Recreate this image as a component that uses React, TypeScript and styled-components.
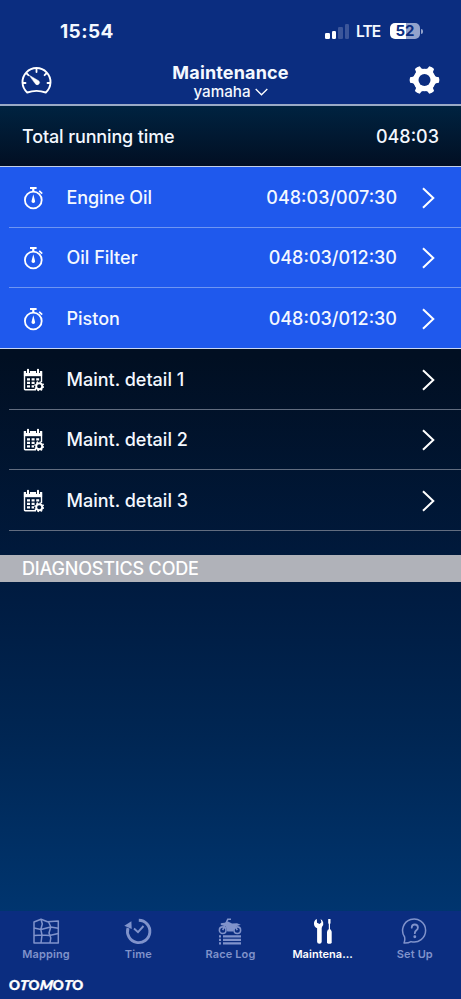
import React from "react";
import styled, { createGlobalStyle } from "styled-components";

const Global = createGlobalStyle`
  * { box-sizing: border-box; }
  body { margin: 0; background: #0b2d80; font-family: Inter, "Liberation Sans", sans-serif; color: #f4f8ff; }
  svg { display: block; flex: none; }
`;

const Screen = styled.div`
  width: 461px;
  height: 999px;
  display: flex;
  flex-direction: column;
  overflow: hidden;
`;

const Header = styled.header`
  height: 106px;
  background: #0b2d80;
  border-bottom: 2px solid #9aaac6;
  flex: none;
`;

const StatusBar = styled.div`
  height: 42px;
  padding: 20px 38px 0 60px;
  display: flex;
  align-items: center;
  justify-content: space-between;
`;

const Clock = styled.span`
  padding-top: 1px;
  font-size: 19px;
  line-height: 20px;
  font-weight: 700;
  letter-spacing: 0.4px;
`;

const StatusIcons = styled.div`
  display: flex;
  align-items: center;
`;

const Signal = styled.div`
  display: flex;
  align-items: flex-end;
  gap: 2px;
  height: 15px;
`;

const Bar = styled.i<{ $h: number; $on?: boolean }>`
  width: 4.5px;
  height: ${(p) => p.$h}px;
  border-radius: 1.2px;
  background: ${(p) => (p.$on ? "#fff" : "#3c569a")};
`;

const Network = styled.span`
  width: 25px;
  margin: 1px 9px 0 7px;
  font-size: 15.5px;
  line-height: 18px;
  font-weight: 600;
  letter-spacing: -0.9px;
  white-space: nowrap;
`;

const Battery = styled.div`
  width: 30px;
  height: 16px;
  border-radius: 5px;
  background: linear-gradient(90deg, #fff 52%, #93a3cc 52%);
  color: #0b2d80;
  font-size: 15px;
  line-height: 16px;
  font-weight: 700;
  text-align: center;
`;

const BatteryTip = styled.i`
  width: 2px;
  height: 5px;
  margin-left: 1px;
  border-radius: 0 2px 2px 0;
  background: #93a3cc;
`;

const TitleBar = styled.div`
  height: 62px;
  padding: 0 21px;
  display: flex;
  justify-content: space-between;
`;

const IconSlot = styled.div<{ $top: number }>`
  width: 31px;
  padding-top: ${(p) => p.$top}px;
`;

const Titles = styled.div`
  display: flex;
  flex-direction: column;
  align-items: center;
  padding-top: 20px;
`;

const Title = styled.h1`
  margin: 0;
  font-size: 18px;
  line-height: 21px;
  font-weight: 700;
  letter-spacing: 0.15px;
`;

const Vehicle = styled.div`
  display: flex;
  align-items: center;
  gap: 4px;
  font-size: 15.2px;
  line-height: 18px;
  font-weight: 450;
`;

const Total = styled.section`
  height: 61px;
  flex: none;
  padding: 1px 22px 0;
  display: flex;
  align-items: center;
  justify-content: space-between;
  background: linear-gradient(#002341, #020f23);
  border-bottom: 1px solid #c3d1e8;
`;

const Label = styled.span<{ $ls?: number }>`
  font-size: 18px;
  line-height: 22px;
  font-weight: 500;
  letter-spacing: ${(p) => p.$ls ?? 0}px;
  white-space: nowrap;
`;

const Content = styled.main`
  flex: 1;
  background: linear-gradient(#010f22 0, #010f22 190px, #001b40 420px, #002653 570px, #00356f 744px);
`;

const Group = styled.div<{ $active?: boolean }>`
  height: 182px;
  background: ${(p) => (p.$active ? "#1f59ed" : "transparent")};
  border-bottom: ${(p) => (p.$active ? "1px solid #cad8f6" : "0")};
`;

const Row = styled.div<{ $line: string }>`
  height: 60.5px;
  margin-left: 9px;
  padding: 2px 26px 0 14px;
  display: flex;
  align-items: center;
  border-bottom: 1px solid ${(p) => p.$line};
  &:last-child { ${(p) => p.$line === "#6e95f2" && "border-color: transparent;"} }
`;

const RowName = styled(Label)`
  flex: 1;
  margin-left: 22.5px;
`;

const RowTime = styled(Label)`
  margin-right: 25px;
`;

const Section = styled.h2`
  height: 27px;
  margin: 24px 0 0;
  padding-left: 22px;
  background: #b0b2b9;
  color: #fff;
  font-size: 18px;
  line-height: 28px;
  font-weight: 500;
  letter-spacing: -0.18px;
`;

const Footer = styled.footer`
  height: 88px;
  flex: none;
  background: #0b2d80;
`;

const Tabs = styled.nav`
  display: grid;
  grid-template-columns: repeat(5, 92.2px);
  height: 67px;
`;

const Tab = styled.div<{ $on?: boolean }>`
  display: flex;
  flex-direction: column;
  align-items: center;
  padding-top: 6px;
  color: ${(p) => (p.$on ? "#fff" : "#8093cb")};
  font-size: 11px;
  line-height: 14px;
  font-weight: 600;
  letter-spacing: ${(p) => (p.$on ? 0.05 : 0.12)}px;
  svg { margin-bottom: 2px; }
`;

const Brand = styled.div`
  display: flex;
  gap: 0.2px;
  padding-left: 9px;
  font-family: Lato, Inter, sans-serif;
  font-size: 13.5px;
  line-height: 15px;
  font-weight: 900;
  color: #fff;
  -webkit-text-stroke: 0.4px #fff;
  em { display: inline-block; font-style: normal; transform: skewX(-14deg); }
`;

const Gauge = () => (
  <svg width="31" height="28" viewBox="0 0 31 28" fill="none" stroke="#fff" strokeWidth="1.9" strokeLinecap="round" strokeLinejoin="round">
    <path d="M6.2 25.5A14 14 0 1 1 24.8 25.5Q15.5 22.3 6.2 25.5Z" />
    <path d="M15.5 2v3M5.7 6.5l1.7 1.7M25.3 6.5l-1.7 1.7M2 16h2.5M29 16h-2.5" strokeWidth="1.8" />
    <path d="M8.3 8.3L17.9 13.9A2.3 2.3 0 0 1 14.5 17Z" fill="#fff" stroke="#fff" strokeWidth=".5" />
  </svg>
);

const Gear = () => (
  <svg width="31" height="30" viewBox="-15.5 -15 31 30">
    <g fill="#fff">
      <circle r="11.3" />
      {[0, 60, 120, 180, 240, 300].map((a) => (
        <path key={a} transform={`rotate(${a})`} d="M9 -5.2L11.5 -3.2L14.4 -2.8Q15.4 0 14.4 2.8L11.5 3.2L9 5.2Z" />
      ))}
    </g>
    <circle r="6" fill="#0b2d80" />
  </svg>
);

const Stopwatch = () => (
  <svg width="21" height="24" viewBox="0 0 21 24" fill="none" stroke="#fff">
    <circle cx="10.3" cy="14" r="8.4" strokeWidth="1.8" />
    <path d="M7 2h6.6M10.3 2v3.5" strokeWidth="2.2" />
    <path d="M16.2 4.8l3 2.8" strokeWidth="1.7" />
    <path d="M10.3 8.3L12 14.7A1.8 1.8 0 1 1 8.6 14.7Z" fill="#fff" stroke="none" />
  </svg>
);

const Calendar = () => (
  <svg width="21" height="24" viewBox="0 0 21 24" fill="none" stroke="#fff">
    <path d="M13 21.8H2.2Q1.5 21.8 1.5 21V4H18.5V14" strokeWidth="1.4" />
    <path d="M.9 3H19.1V8.2H.9Z" fill="#fff" stroke="none" />
    <path d="M5 1.5v3.5M15 1.5v3.5" stroke="#010f22" strokeWidth="3.8" />
    <path d="M5 1.7v3.3M15 1.7v3.3" strokeWidth="2.1" strokeLinecap="round" />
    <path d="M4 11.3h3M8.6 11.3h3M13.2 11.3h3M4 14.8h3M8.6 14.8h3M4 18.3h3M8.6 18.3h2.4" strokeWidth="2.3" />
    <circle cx="16.2" cy="18.2" r="3" strokeWidth="1.9" />
    <circle cx="16.2" cy="18.2" r="4.3" strokeWidth="1.4" strokeDasharray="1.7 1.677" />
  </svg>
);

const Chevron = () => (
  <svg width="13" height="22" viewBox="0 0 13 22" fill="none" stroke="#fff" strokeWidth="2">
    <path d="M1 1.2L11.3 11L1 20.8" />
  </svg>
);

const MapIcon = () => (
  <svg width="28" height="28" viewBox="0 0 28 28" fill="none" stroke="currentColor" strokeWidth="1.5" strokeLinejoin="round">
    <path d="M2 5L9 2.2L15.5 4.8L26.3 4V26H2Z" />
    <path d="M9 2.2L10.3 7L8.8 12.5L10 18L9 26M16.5 4.8L18.8 10L17 16L18.8 21L18 26M2 11L9 12.5L18.5 10L26.3 11.2M2 18.5L10 18L17.5 18.5L26.3 16.5" />
  </svg>
);

const TimeIcon = () => (
  <svg width="28" height="28" viewBox="0 0 28 28" fill="none" stroke="currentColor">
    <path d="M14.8 3.2A11.2 11.2 0 1 1 4 11" strokeWidth="2.9" />
    <path d="M.3 8.7L7.4 4.3L7.7 12Z" fill="currentColor" stroke="none" />
    <path d="M10 11.5L14 15.2L19.5 9" strokeWidth="1.9" />
  </svg>
);

const RaceIcon = () => (
  <svg width="28" height="28" viewBox="0 0 28 28" fill="none" stroke="currentColor">
    <circle cx="6.7" cy="13.2" r="3.3" strokeWidth="1.6" />
    <circle cx="21.3" cy="13.2" r="3.3" strokeWidth="1.6" />
    <path d="M4.8 6.2L10 5.5L12 4.5L16 6.5L21 6.2L24.8 7.8L19.5 9.4L17.3 14.5H11.3L9.8 9.6L4.8 8Z" fill="currentColor" stroke="none" />
    <path d="M15 2.3H11.8L6.7 13.2M18.5 8.5L21.3 13.2" strokeWidth="1.6" />
    <path d="M3 19.3h2M7 19.3h18M3 22.8h2M7 22.8h18M3 26.3h2M7 26.3h18" strokeWidth="2.3" />
  </svg>
);

const ToolsIcon = () => (
  <svg width="28" height="28" viewBox="0 0 28 28" fill="currentColor">
    <path d="M7.8 1.9L8 5.8L10.6 7L12.4 5.3L11.6 2A5 5 0 0 1 13.2 9.6L12.7 11V24.8Q12.7 26.8 10.4 26.8T8.1 24.8V11.3A5.2 5.2 0 0 1 7.8 1.9Z" />
    <path d="M19.2 2h2.3v4L21 7.2V13h-1.2V7.2L19.2 6Z" />
    <path d="M19 12.5h2.8l.9 2.3v10.5q0 1.4-1.3 1.4h-2.2q-1.2 0-1.2-1.4V14.8Z" />
  </svg>
);

const HelpIcon = () => (
  <svg width="28" height="28" viewBox="0 0 28 28" fill="none" stroke="currentColor" strokeWidth="1.5" strokeLinecap="round" strokeLinejoin="round">
    <path d="M3 26Q4.2 23.8 3.6 20A11.5 11.5 0 1 1 10 24.6Q7.2 26.2 3 26Z" />
    <path d="M10.7 10.7Q10.8 7.5 13.8 7.5T16.9 10.4Q16.9 12.1 15.4 13.2T13.8 16.2" strokeWidth="1.8" />
    <circle cx="13.8" cy="19.7" r=".7" fill="currentColor" />
  </svg>
);

const maintenance = [
  { name: "Engine Oil", time: "048:03/007:30", ls: -0.1 },
  { name: "Oil Filter", time: "048:03/012:30", ls: 0 },
  { name: "Piston", time: "048:03/012:30", ls: 0 },
];

const details = ["Maint. detail 1", "Maint. detail 2", "Maint. detail 3"];

const tabs = [
  { name: "Mapping", Icon: MapIcon },
  { name: "Time", Icon: TimeIcon },
  { name: "Race Log", Icon: RaceIcon },
  { name: "Maintena...", Icon: ToolsIcon, on: true },
  { name: "Set Up", Icon: HelpIcon },
];

export default function App() {
  return (
    <Screen>
      <Global />
      <Header>
        <StatusBar>
          <Clock>15:54</Clock>
          <StatusIcons>
            <Signal>
              <Bar $h={5.5} $on />
              <Bar $h={8} $on />
              <Bar $h={11.5} />
              <Bar $h={14.5} />
            </Signal>
            <Network>LTE</Network>
            <Battery>52</Battery>
            <BatteryTip />
          </StatusIcons>
        </StatusBar>
        <TitleBar>
          <IconSlot $top={25}><Gauge /></IconSlot>
          <Titles>
            <Title>Maintenance</Title>
            <Vehicle>
              yamaha
              <svg width="13" height="8" viewBox="0 0 13 8" fill="none" stroke="#fff" strokeWidth="1.3">
                <path d="M.7 1L6.5 6.8L12.3 1" />
              </svg>
            </Vehicle>
          </Titles>
          <IconSlot $top={23}><Gear /></IconSlot>
        </TitleBar>
      </Header>
      <Total>
        <Label $ls={-0.14}>Total running time</Label>
        <Label>048:03</Label>
      </Total>
      <Content>
        <Group $active>
          {maintenance.map((m) => (
            <Row key={m.name} $line="#6e95f2">
              <Stopwatch />
              <RowName $ls={m.ls}>{m.name}</RowName>
              <RowTime>{m.time}</RowTime>
              <Chevron />
            </Row>
          ))}
        </Group>
        <Group>
          {details.map((d) => (
            <Row key={d} $line="#626d80">
              <Calendar />
              <RowName>{d}</RowName>
              <Chevron />
            </Row>
          ))}
        </Group>
        <Section>DIAGNOSTICS CODE</Section>
      </Content>
      <Footer>
        <Tabs>
          {tabs.map(({ name, Icon, on }) => (
            <Tab key={name} $on={on}>
              <Icon />
              {name}
            </Tab>
          ))}
        </Tabs>
        <Brand>O<em>T</em>O<em>M</em>O<em>T</em>O</Brand>
      </Footer>
    </Screen>
  );
}
